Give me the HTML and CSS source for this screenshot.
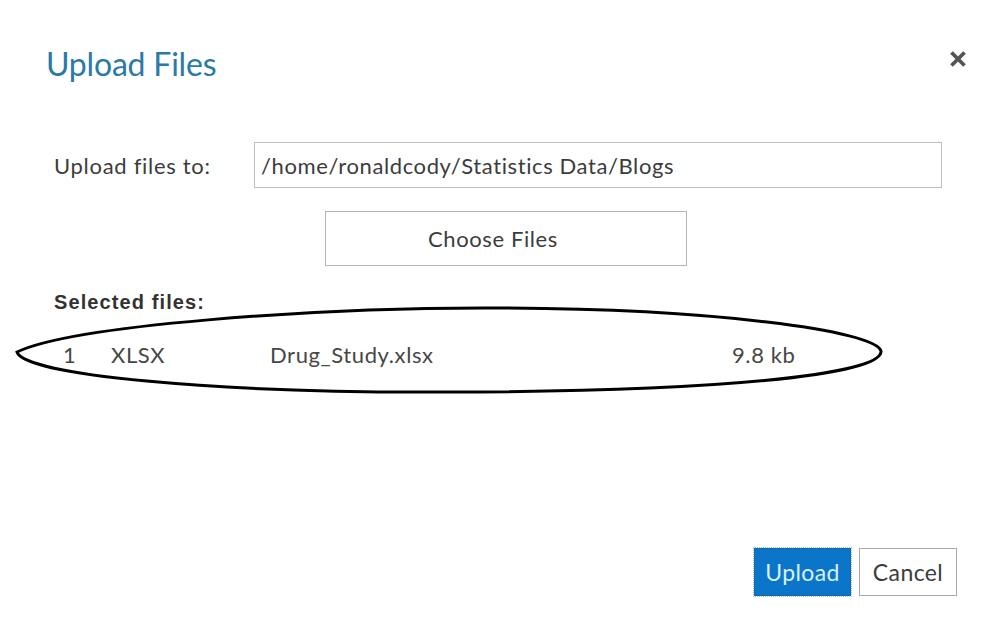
FILE: index.html
```html
<!DOCTYPE html>
<html>
<head>
<meta charset="utf-8">
<link rel="stylesheet" href="styles.css">
</head>
<body>
<div class="dialog">
  <div class="header">
    <h1 class="title">Upload Files</h1>
    <span class="close" aria-label="Close">
      <svg width="18" height="18" viewBox="0 0 18 18"><path d="M2.5 2.5 L15.5 15.5 M15.5 2.5 L2.5 15.5" stroke="#555" stroke-width="3.8" stroke-linecap="butt"/></svg>
    </span>
  </div>
  <div class="form-row">
    <label class="label">Upload files to:</label>
    <div class="input">/home/ronaldcody/Statistics Data/Blogs</div>
  </div>
  <div class="choose-row">
    <div class="choose-btn">Choose Files</div>
  </div>
  <div class="selected">
    <div class="selected-title">Selected files:</div>
    <div class="file-row">
      <span class="c-num">1</span>
      <span class="c-type">XLSX</span>
      <span class="c-name">Drug_Study.xlsx</span>
      <span class="c-size">9.8 kb</span>
    </div>
    <svg class="annot" width="880" height="96" viewBox="0 0 880 96">
      <path d="M3 49 C 60 22, 300 5, 470 5 C 700 5, 862 28, 867 48 C 869 72, 700 89, 430 89 C 200 90, 10 72, 3 49 Z" fill="none" stroke="#000" stroke-width="3"/>
    </svg>
  </div>
  <div class="footer">
    <div class="btn primary">Upload</div>
    <div class="btn">Cancel</div>
  </div>
</div>
</body>
</html>
```

FILE: styles.css
```css
html, body {
  margin: 0;
  padding: 0;
  background: #fff;
}
body {
  font-family: Lato, "Open Sans", sans-serif;
  color: #3c3c3c;
}
.dialog {
  width: 1008px;
  height: 619px;
  box-sizing: border-box;
  display: flex;
  flex-direction: column;
}
.header {
  display: flex;
  align-items: center;
  justify-content: space-between;
  padding: 40px 41px 0 46px;
  height: 46px;
}
.title {
  margin: 0;
  font-weight: 400;
  font-size: 32px;
  color: #2a7aa6;
  letter-spacing: -0.2px;
}
.close {
  display: flex;
  width: 18px;
  height: 18px;
  margin-top: -8px;
}
.form-row {
  display: flex;
  align-items: center;
  margin-top: 56px;
  padding-left: 54px;
}
.label {
  width: 200px;
  font-size: 22px;
  letter-spacing: 0.7px;
  font-weight: 400;
  color: #3c3c3c;
}
.input {
  width: 688px;
  height: 46px;
  box-sizing: border-box;
  border: 1px solid #bdbdbd;
  padding-left: 6px;
  display: flex;
  align-items: center;
  font-size: 22px;
  letter-spacing: 0.6px;
  color: #3c3c3c;
}
.choose-row {
  display: flex;
  padding-left: 325px;
  margin-top: 23px;
}
.choose-btn {
  width: 362px;
  height: 55px;
  box-sizing: border-box;
  border: 1px solid #b5b5b5;
  display: flex;
  align-items: center;
  justify-content: center;
  padding-right: 26px;
  font-size: 22px;
  letter-spacing: 0.6px;
  color: #3c3c3c;
}
.selected {
  position: relative;
  padding-left: 54px;
  margin-top: 25px;
}
.selected-title {
  font-family: "Liberation Sans", Arial, sans-serif;
  font-weight: 700;
  font-size: 20px;
  letter-spacing: 1.1px;
  color: #333;
  line-height: 22px;
}
.file-row {
  display: flex;
  align-items: center;
  margin-top: 28px;
  font-size: 22px;
  letter-spacing: 0.6px;
  color: #474747;
  line-height: 28px;
}
.c-num { width: 57px; padding-left: 9px; box-sizing: border-box; }
.c-type { width: 159px; }
.c-name { width: 462px; }
.annot {
  position: absolute;
  left: 14px;
  top: 12px;
}
.footer {
  margin-top: auto;
  display: flex;
  justify-content: flex-end;
  gap: 8px;
  padding: 0 51px 23px 0;
}
.btn {
  width: 98px;
  height: 48px;
  box-sizing: border-box;
  border: 1px solid #aaa;
  display: flex;
  align-items: center;
  justify-content: center;
  font-size: 23px;
  letter-spacing: 0.4px;
  color: #3c3c3c;
}
.btn.primary {
  width: 97px;
  background: #0b76c9;
  color: #d6f0ff;
  border: 1px dotted #1d5f8a;
  outline: 1px dotted #9cc6e6;
}
```
